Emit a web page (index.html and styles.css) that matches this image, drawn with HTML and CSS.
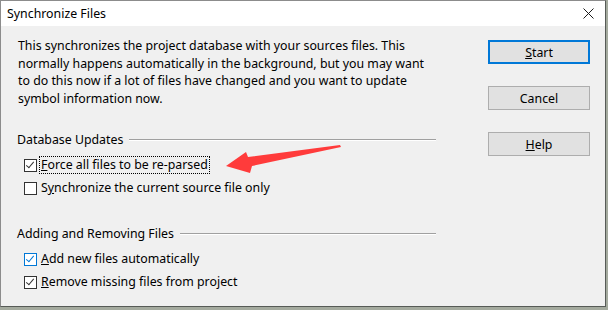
FILE: index.html
```html
<!DOCTYPE html>
<html>
<head>
    <title>Synchronize Files</title>
    <link rel="stylesheet" href="styles.css">
</head>
<body>
    <div class="window">
        <div class="titlebar">
            <span class="title">Synchronize Files</span>
            <svg class="close" width="11" height="11" viewBox="0 0 11 11">
                <path d="M0.5 0.5 L10.5 10.5 M10.5 0.5 L0.5 10.5" stroke="#1a1a1a" stroke-width="1" fill="none"/>
            </svg>
        </div>
        <div class="content">
            <div class="main">
                <p class="intro">
                    This synchronizes the project database with your sources files. This<br>
                    normally happens automatically in the background, but you may want<br>
                    to do this now if a lot of files have changed and you want to update<br>
                    symbol information now.
                </p>

                <div class="group">
                    <div class="group-title"><span>Database Updates</span><div class="rule"></div></div>
                    <label class="check">
                        <span class="box checked"></span>
                        <span class="label focused"><u>F</u>orce all files to be re-parsed</span>
                    </label>
                    <label class="check">
                        <span class="box"></span>
                        <span class="label">S<u>y</u>nchronize the current source file only</span>
                    </label>
                </div>

                <div class="group">
                    <div class="group-title"><span>Adding and Removing Files</span><div class="rule"></div></div>
                    <label class="check">
                        <span class="box checked hover"></span>
                        <span class="label"><u>A</u>dd new files automatically</span>
                    </label>
                    <label class="check">
                        <span class="box checked"></span>
                        <span class="label"><u>R</u>emove missing files from project</span>
                    </label>
                </div>
            </div>

            <div class="buttons">
                <button class="btn default"><u>S</u>tart</button>
                <button class="btn">Cancel</button>
                <button class="btn"><u>H</u>elp</button>
            </div>
        </div>
    </div>

    <!-- annotation arrow drawn over the dialog -->
    <svg class="arrow" width="608" height="310" viewBox="0 0 608 310">
        <polygon points="226,166 246,152 248,157 340,145 341,147 252,166 250,173" fill="#ff3b3b"/>
    </svg>
</body>
</html>
```

FILE: styles.css
```css
body { margin: 0; background: #a4aa9e; font-family: "Noto Sans", sans-serif; font-size: 12.35px; color: #000; }
.window { width: 604px; height: 305px; border: 1px solid; border-color: #8c8c8c #575b57 #575b57 #8c8c8c; background: #f0f0f0; display: flex; flex-direction: column; }
.titlebar { height: 25px; background: #fff; display: flex; align-items: center; justify-content: space-between; padding: 0 11px 0 6px; }
.title { line-height: 25px; }
.close { display: block; }
.content { flex: 1; display: flex; padding: 11px 15px 0 16px; }
.main { width: 419px; }
.intro { margin: 0; line-height: 17.6px; padding-left: 1px; }
.group { margin-top: 24px; }
.group + .group { margin-top: 25px; }
.group-title { display: flex; align-items: center; line-height: 17.6px; margin-bottom: 5px; }
.group-title span { margin-right: 6px; }
.rule { flex: 1; height: 0; border-top: 1px solid #a0a0a0; border-bottom: 1px solid #fff; }
.check { display: flex; align-items: center; height: 23px; padding-left: 7px; }
.box { width: 11px; height: 11px; border: 1px solid #333; background: #fff; position: relative; margin-right: 2px; }
.box.checked::after { content: ""; position: absolute; left: 3px; top: 0px; width: 3px; height: 7px; border: solid #333; border-width: 0 1px 1px 0; transform: rotate(40deg); }
.box.hover { border-color: #0078d7; }
.box.hover::after { border-color: #0078d7; }
.label { padding: 0 1px; line-height: 16px; border: 1px dotted transparent; }
.label.focused { border-color: #000; }
.label u { text-decoration-thickness: 1px; }
.buttons { margin-left: auto; display: flex; flex-direction: column; gap: 22px; padding-top: 3px; }
.btn { width: 102px; height: 24px; background: #e1e1e1; border: 1px solid #adadad; font: inherit; color: #000; padding: 0; }
.btn.default { border: 2px solid #0078d7; }
.arrow { position: absolute; left: 0; top: 0; pointer-events: none; }
```
